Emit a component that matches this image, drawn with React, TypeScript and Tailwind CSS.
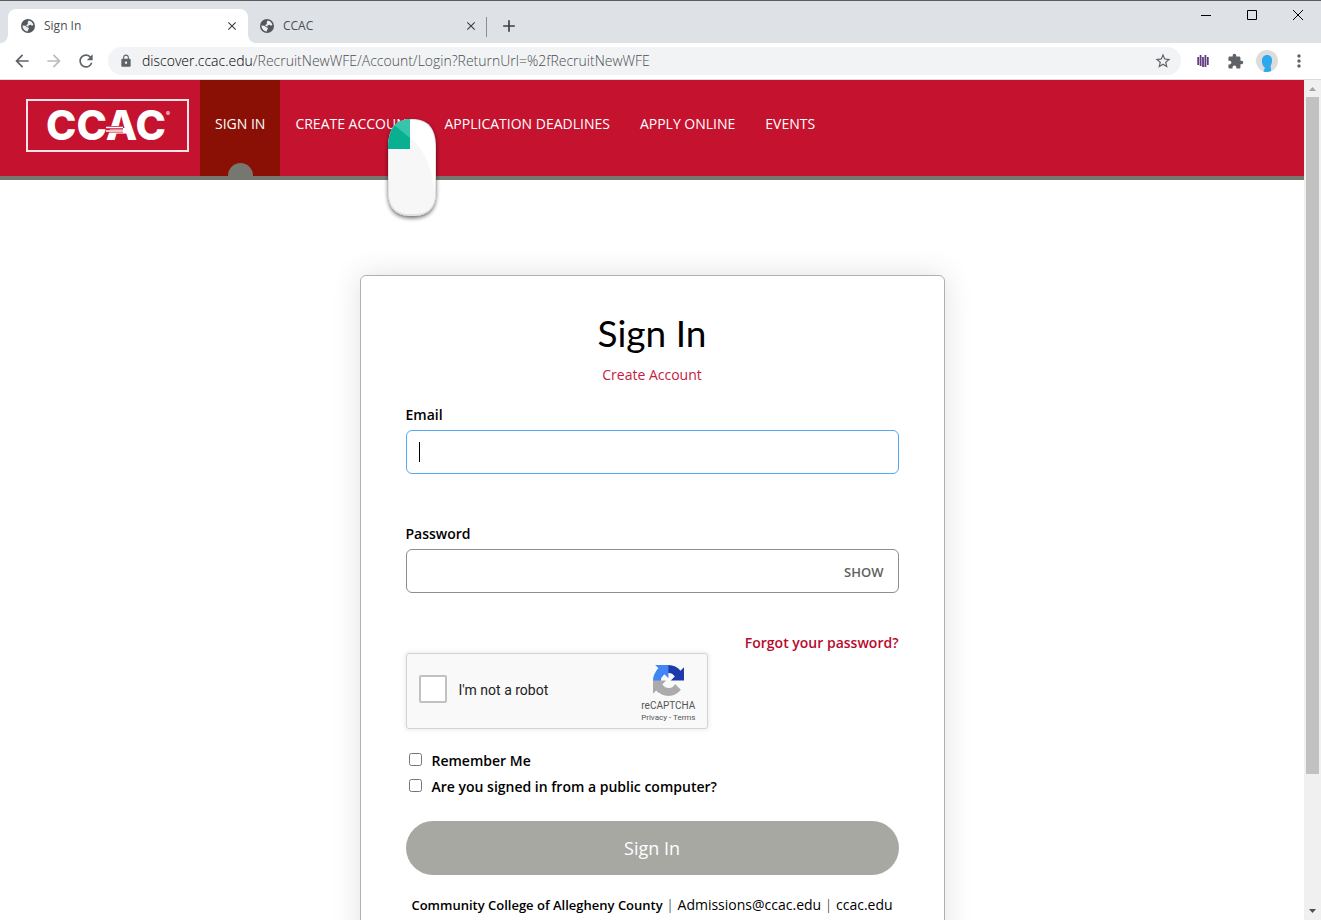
import React, { useState } from "react";
import {
  MdAdd,
  MdArrowBack,
  MdArrowForward,
  MdClose,
  MdExtension,
  MdLock,
  MdMoreVert,
  MdRefresh,
  MdStarBorder,
} from "react-icons/md";

const tabs = [
  { title: "Sign In", active: true },
  { title: "CCAC", active: false },
];

const navItems = [
  { label: "SIGN IN", active: true },
  { label: "CREATE ACCOUNT", active: false },
  { label: "APPLICATION DEADLINES", active: false },
  { label: "APPLY ONLINE", active: false },
  { label: "EVENTS", active: false },
];

const iconButton =
  "flex size-7 shrink-0 items-center justify-center rounded-full text-[#5f6368]";

const GlobeIcon: React.FC = () => (
  <svg className="size-4" viewBox="0 0 16 16">
    <circle cx="8" cy="8" r="7" fill="#54585d" />
    <path
      d="M8.500 2.500c2.600.3 4.500 2.200 4.900 4.600l-1.500.6-1.200-.9-2 .5-.4 1.200-2-.2.300-1.500 1.500-.7-.5-1.300z"
      fill="#eef0f2"
    />
    <path
      d="M2.500 7.600l3 .2 1 1.300 1.700.3.900 1.300-1 1.100-.4 1.800C4.800 13.300 2.500 11 2.500 7.600z"
      fill="#eef0f2"
    />
  </svg>
);

const TabStrip: React.FC = () => (
  <div className="flex h-[43px] items-end border-t border-[#5c5d60] bg-[#dee1e6] pl-2">
    {tabs.map((tab) => (
      <div
        key={tab.title}
        className={
          tab.active
            ? "relative flex h-[34px] w-60 items-center rounded-t-lg bg-white pr-2 pl-3"
            : "flex h-[34px] w-[238px] items-center pr-[7px] pl-[11px]"
        }
      >
        {tab.active && (
          <>
            <svg className="absolute bottom-0 -left-2 size-2" viewBox="0 0 8 8">
              <path d="M8 0v8H0a8 8 0 0 0 8-8z" fill="#fff" />
            </svg>
            <svg className="absolute -right-2 bottom-0 size-2" viewBox="0 0 8 8">
              <path d="M0 0v8h8a8 8 0 0 1-8-8z" fill="#fff" />
            </svg>
          </>
        )}
        <GlobeIcon />
        <button type="button" className="flex-1 pl-2 text-left text-xs text-[#4a4d51]">
          {tab.title}
        </button>
        <button
          type="button"
          aria-label={`Close ${tab.title}`}
          className="flex size-4 items-center justify-center text-[#3c4043]"
        >
          <MdClose className="size-3.5" />
        </button>
      </div>
    ))}
    <div className="mb-1.5 h-5 w-px bg-[#8a8d91]" />
    <button
      type="button"
      aria-label="New tab"
      className="mb-[3px] ml-2 flex size-7 items-center justify-center text-[#3c4043]"
    >
      <MdAdd className="size-5" />
    </button>
    <div className="ml-auto flex h-7 self-start text-black">
      <button type="button" aria-label="Minimize" className="flex w-[46px] items-center justify-center">
        <svg className="size-2.5" viewBox="0 0 10 10" stroke="currentColor" fill="none">
          <path d="M0 5.500h10" />
        </svg>
      </button>
      <button type="button" aria-label="Maximize" className="flex w-[46px] items-center justify-center">
        <svg className="size-2.5" viewBox="0 0 10 10" stroke="currentColor" fill="none">
          <path d="M.5.5h9v9h-9z" />
        </svg>
      </button>
      <button type="button" aria-label="Close" className="flex w-[46px] items-center justify-center">
        <svg className="size-2.5" viewBox="0 0 10 10" stroke="currentColor" fill="none">
          <path d="M0 0l10 10M10 0L0 10" />
        </svg>
      </button>
    </div>
  </div>
);

const Toolbar: React.FC = () => (
  <div className="flex h-[37px] items-center gap-1 border-b border-[#dadce0] bg-white px-2">
    <button type="button" aria-label="Back" className={iconButton}>
      <MdArrowBack className="size-5" />
    </button>
    <button type="button" aria-label="Forward" className={iconButton}>
      <MdArrowForward className="size-5 text-[#b9bbbe]" />
    </button>
    <button type="button" aria-label="Reload" className={iconButton}>
      <MdRefresh className="size-5" />
    </button>
    <div className="mx-1 flex h-7 flex-1 items-center rounded-full bg-[#f1f3f4] pr-1 pl-[11px] text-sm font-light text-[#4a4d51]">
      <MdLock className="mr-[9px] size-3.5 text-[#5f6368]" />
      <label htmlFor="address" className="text-black">
        discover.ccac.edu
      </label>
      <input
        id="address"
        className="min-w-0 flex-1 bg-transparent outline-none"
        defaultValue="/RecruitNewWFE/Account/Login?ReturnUrl=%2fRecruitNewWFE"
      />
      <button type="button" aria-label="Bookmark" className={iconButton}>
        <MdStarBorder className="size-[18px]" />
      </button>
    </div>
    <button type="button" aria-label="Recorder" className={iconButton}>
      <svg className="size-3.5" viewBox="0 0 14 14" stroke="#5f3d7f" strokeWidth="1.800">
        <path d="M2.200 3v8M4.600 1v11M7 3v10M9.400 1v12M11.800 3v8" />
      </svg>
    </button>
    <button type="button" aria-label="Extensions" className={iconButton}>
      <MdExtension className="size-[17px]" />
    </button>
    <button type="button" aria-label="Profile" className={iconButton}>
      <svg className="size-[22px]" viewBox="0 0 22 22">
        <circle cx="11" cy="11" r="11" fill="#dcdcdc" />
        <path
          d="M11 5c3.200 0 5 2.200 5 5.200 0 2.600-.6 4-1.400 5.500l.6 5.300c-2.400 1.200-5.400 1.300-7.800.4l1.600-3.600c-2.200-1.500-3.100-4.300-3.100-7C5.900 7.300 8 5 11 5z"
          fill="#2aa9ee"
        />
      </svg>
    </button>
    <button type="button" aria-label="Menu" className={iconButton}>
      <MdMoreVert className="size-5" />
    </button>
  </div>
);

const Logo: React.FC = () => (
  <svg className="h-[53px] w-[163px]" viewBox="0 0 163 53" role="img" aria-label="CCAC">
    <rect x="1" y="1" width="161" height="51" fill="none" stroke="#fbe3e6" strokeWidth="2" />
    <text x="20" y="41" fontFamily="Inter, sans-serif" fontSize="41" fontWeight="800" fill="#fff">
      CCAC
    </text>
    <path d="M80 28.500h17M80 32h17" stroke="#c4122f" strokeWidth="3" />
    <path d="M80 28.500h17M80 32h17" stroke="#fff" strokeWidth="1.500" />
    <text x="140" y="17" fontFamily="Inter, sans-serif" fontSize="6" fill="#fff">
      ®
    </text>
  </svg>
);

const SiteHeader: React.FC = () => (
  <header className="flex h-[100px] border-b-4 border-[#767870] bg-[#c4122f] pl-[26px]">
    <a href="#" className="mr-[11px] flex items-center pb-[5px]">
      <Logo />
    </a>
    <nav className="flex">
      {navItems.map((item) => (
        <a
          key={item.label}
          href="#"
          className={
            item.active
              ? "relative flex items-center overflow-hidden bg-[#8a0f05] px-[15px] pb-2 text-sm text-white"
              : "flex items-center px-[15px] pb-2 text-sm text-white"
          }
        >
          {item.label}
          {item.active && (
            <span className="absolute -bottom-3 left-7 size-[25px] rounded-full bg-[#767870]" />
          )}
        </a>
      ))}
    </nav>
  </header>
);

const RecaptchaMark: React.FC = () => (
  <svg className="size-[31px]" viewBox="0 0 64 64">
    <path
      fill="#1c3aa9"
      d="M64 31.955l-.033-1.370V4.687l-7.160 7.160C50.948 4.674 42.033.093 32.050.093c-10.400 0-19.622 4.960-25.458 12.640l11.736 11.860a15.550 15.550 0 0 1 4.754-5.334c2.050-1.600 4.952-2.906 8.968-2.906.485 0 .86.057 1.135.163 4.976.393 9.288 3.140 11.828 7.124l-8.307 8.307L64 31.953"
    />
    <path
      fill="#4285f4"
      d="M31.862.094l-1.370.033H4.594l7.160 7.160C4.580 13.147 0 22.060 0 32.046c0 10.400 4.960 19.622 12.640 25.458L24.500 45.768a15.550 15.550 0 0 1-5.334-4.754c-1.600-2.050-2.906-4.952-2.906-8.968 0-.485.057-.86.163-1.135.393-4.976 3.140-9.288 7.124-11.828l8.307 8.307L31.860.095"
    />
    <path
      fill="#ababab"
      d="M.001 32.045l.033 1.370v25.898l7.160-7.160c5.860 7.173 14.774 11.754 24.760 11.754 10.400 0 19.622-4.960 25.458-12.640l-11.736-11.860a15.550 15.550 0 0 1-4.754 5.334c-2.050 1.600-4.952 2.906-8.968 2.906-.485 0-.86-.057-1.135-.163-4.976-.393-9.288-3.140-11.828-7.124l8.307-8.307-27.299.001"
    />
  </svg>
);

const Recaptcha: React.FC = () => (
  <div className="flex h-[76px] w-[302px] items-center rounded-[3px] border border-[#d3d3d3] bg-[#f9f9f9] pr-[11px] pb-[3px] pl-3 font-[Roboto,sans-serif] shadow-[0_0_4px_1px_rgba(0,0,0,0.08)]">
    <input
      id="robot"
      type="checkbox"
      className="mb-0.5 size-7 appearance-none rounded-[2px] border-2 border-[#c1c1c1] bg-white"
    />
    <label htmlFor="robot" className="flex-1 pl-3 text-sm text-[#222]">
      I'm not a robot
    </label>
    <div className="flex flex-col items-center pt-2.5 text-[#555]">
      <RecaptchaMark />
      <span className="pt-1 text-[10px] leading-3">reCAPTCHA</span>
      <span className="text-[8px] leading-3">
        <a href="#">Privacy</a> - <a href="#">Terms</a>
      </span>
    </div>
  </div>
);

const SignInForm: React.FC = () => {
  const [visible, setVisible] = useState(false);

  return (
    <form className="mx-auto mt-[95px] w-full max-w-[585px] rounded-md border border-[#afb0b3] bg-white px-[45px] pt-[33px] pb-10 text-sm leading-5 text-black shadow-[0_0_30px_rgba(0,0,0,0.12)]">
      <h1 className="text-center font-[Lato,sans-serif] text-[37px] leading-12">Sign In</h1>
      <p className="mt-2 text-center">
        <a href="#" className="text-[#c4203f]">
          Create Account
        </a>
      </p>

      {/* Email */}
      <label htmlFor="email" className="mt-5 block font-semibold">
        Email
      </label>
      <div className="relative mt-[5px]">
        <input
          id="email"
          type="email"
          className="block h-11 w-full rounded-md border border-[#53a8f3] bg-white px-3 outline-none"
        />
        <span className="absolute top-3 left-[13px] h-5 w-px bg-black" />
      </div>

      {/* Password */}
      <label htmlFor="password" className="mt-[50px] block font-semibold">
        Password
      </label>
      <div className="mt-[5px] flex h-11 items-center rounded-md border border-[#8d8e8f] bg-white px-3.5">
        <input
          id="password"
          type={visible ? "text" : "password"}
          className="min-w-0 flex-1 outline-none"
        />
        <button
          type="button"
          onClick={() => setVisible(!visible)}
          className="pt-0.5 text-[13px] font-semibold text-[#60625c]"
        >
          SHOW
        </button>
      </div>

      <p className="mt-10 text-right">
        <a href="#" className="font-semibold text-[#b80a2b]">
          Forgot your password?
        </a>
      </p>
      <Recaptcha />

      <div className="mt-[19px] flex flex-col font-semibold">
        <label className="flex h-[26px] items-center">
          <input type="checkbox" className="mr-2.5 mb-[3px] ml-[3px] size-[13px]" />
          Remember Me
        </label>
        <label className="flex h-[26px] items-center">
          <input type="checkbox" className="mr-2.5 mb-[3px] ml-[3px] size-[13px]" />
          Are you signed in from a public computer?
        </label>
      </div>

      <button
        type="button"
        className="mt-[21px] h-[54px] w-full rounded-full bg-[#a7a8a2] text-lg font-medium text-white"
      >
        Sign In
      </button>

      <p className="mt-5 text-center whitespace-nowrap">
        <span className="text-[13px] font-semibold">Community College of Allegheny County</span>
        <span className="font-light"> | </span>
        <a href="#">Admissions@ccac.edu</a>
        <span className="font-light"> | </span>
        <a href="#">ccac.edu</a>
      </p>
    </form>
  );
};

const Scrollbar: React.FC = () => (
  <div className="flex w-[17px] shrink-0 flex-col bg-[#f0f0f0]">
    <svg className="size-[17px]" viewBox="0 0 17 17">
      <path d="M5 11h7L8.500 7z" fill="#a3a3a3" />
    </svg>
    <div className="flex-1 px-0.5">
      <div className="h-[84%] bg-[#c1c1c1]" />
    </div>
    <svg className="size-[17px]" viewBox="0 0 17 17">
      <path d="M5 6h7l-3.500 4z" fill="#505050" />
    </svg>
  </div>
);

const MouseMarker: React.FC = () => (
  <svg className="absolute top-[114px] left-[380px] h-28 w-16" viewBox="0 0 64 112">
    <defs>
      <filter id="mouseShadow" x="-30%" y="-20%" width="160%" height="140%">
        <feDropShadow dx="0" dy="2" stdDeviation="2" floodColor="#000" floodOpacity="0.6" />
      </filter>
      <clipPath id="mouseBody">
        <path d="M8 34C8 14 16 5 32 5s24 9 24 29v42c0 18-7 26-24 26S8 94 8 76z" />
      </clipPath>
    </defs>
    <path
      d="M8 34C8 14 16 5 32 5s24 9 24 29v42c0 18-7 26-24 26S8 94 8 76z"
      fill="#e2e2e2"
      filter="url(#mouseShadow)"
    />
    <g clipPath="url(#mouseBody)">
      <path d="M9 34C9 14 16 6 32 6s23 9 23 28v42c0 17-7 24-23 24S9 93 9 76z" fill="#fff" />
      <path d="M9 35h21V23c14 13 22 30 25 55 0 16-7 22-23 22S9 93 9 76z" fill="#f7f7f7" />
      <path d="M8 5h22v30H8z" fill="#09af91" />
      <path d="M14 11l16 13V5H14z" fill="#36c4ab" />
    </g>
  </svg>
);

const App: React.FC = () => {
  return (
    <div className="relative flex h-screen flex-col overflow-hidden bg-white font-['Open_Sans',sans-serif]">
      <TabStrip />
      <Toolbar />

      <div className="flex min-h-0 flex-1">
        <main className="min-w-0 flex-1 overflow-hidden">
          <SiteHeader />
          <SignInForm />
        </main>
        <Scrollbar />
      </div>

      <MouseMarker />
    </div>
  );
};

export default App;
